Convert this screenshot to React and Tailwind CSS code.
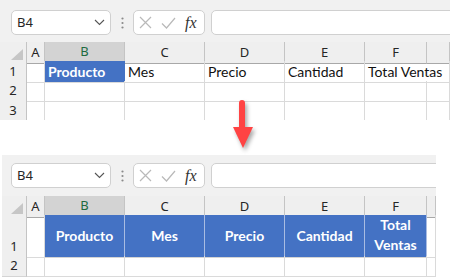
import React from 'react';

const COLS = ['A', 'B', 'C', 'D', 'E', 'F', 'G'];

const TOP_ROWS = [
  {
    n: 1,
    h: 'h-[20px]',
    cells: {
      B: { text: 'Producto', blue: true },
      C: { text: 'Mes' },
      D: { text: 'Precio' },
      E: { text: 'Cantidad' },
      F: { text: 'Total Ventas', overflow: true },
    },
  },
  { n: 2, h: 'h-[20px]', cells: {} },
  { n: 3, h: 'h-[20px]', cells: {} },
];

const BOTTOM_ROWS = [
  {
    n: 1,
    h: 'h-[41px]',
    tall: true,
    cells: {
      B: { text: 'Producto', blue: true, center: true },
      C: { text: 'Mes', blue: true, center: true },
      D: { text: 'Precio', blue: true, center: true },
      E: { text: 'Cantidad', blue: true, center: true },
      F: { text: 'Total Ventas', blue: true, center: true, wrap: true },
    },
  },
  { n: 2, h: 'h-[21px]', cells: {} },
];

function Chevron() {
  return (
    <svg width="11" height="7" viewBox="0 0 11 7" fill="none">
      <path d="M1 1l4.5 4.5L10 1" stroke="#555" strokeWidth="1.1" />
    </svg>
  );
}

function Toolbar({ top }) {
  return (
    <div className={top ? 'flex items-start h-[42px] pt-[10px] pl-[11px] bg-[#f1f1f1]' : 'flex items-start h-[41px] pt-[8px] pl-[9px] bg-[#f1f1f1]'}>
      {/* name box */}
      <div className="flex items-center justify-between w-[100px] h-[25px] pl-[5px] pr-[5px] bg-white border border-[#d0d0d0] rounded-[5px]">
        <span className="text-[13px] text-[#262626]">B4</span>
        <Chevron />
      </div>
      <div className="flex justify-center items-center w-[22px] h-[25px]">
        <svg width="3" height="12" viewBox="0 0 3 12">
          <circle cx="1.5" cy="1.5" r="1.1" fill="#8a8a8a" />
          <circle cx="1.5" cy="6" r="1.1" fill="#8a8a8a" />
          <circle cx="1.5" cy="10.5" r="1.1" fill="#8a8a8a" />
        </svg>
      </div>
      {/* cancel / enter / fx */}
      <div className="flex items-center w-[72px] h-[25px] bg-white border border-[#d0d0d0] rounded-[5px]">
        <svg className="ml-[5px]" width="13" height="13" viewBox="0 0 13 13" fill="none">
          <path d="M1 1l11 11M12 1L1 12" stroke="#b9b9b9" strokeWidth="1.2" />
        </svg>
        <svg className="ml-[9px]" width="15" height="12" viewBox="0 0 15 12" fill="none">
          <path d="M1 6.5l4.5 4.5L14 1" stroke="#b9b9b9" strokeWidth="1.2" />
        </svg>
        <span className="ml-[9px] font-['Liberation_Serif',serif] italic text-[16px] leading-none text-[#333]">fx</span>
      </div>
      {/* formula input */}
      <div className="flex-1 h-[25px] ml-[6px] -mr-[8px] bg-white border border-[#d0d0d0] rounded-[5px]" />
    </div>
  );
}

function HeaderRow({ top }) {
  return (
    <div className={top ? 'grid grid-cols-[27px_18px_80px_80px_80px_80px_62px_1fr] h-[19px]' : 'grid grid-cols-[25px_18px_80px_80px_80px_80px_62px_1fr] h-[19px]'}>
      <div className="flex justify-end items-end pr-[3px] pb-[3px] bg-[#efefef] border-r border-r-[#c4c4c4] border-b border-b-[#a8a8a8]">
        <svg width="12" height="11" viewBox="0 0 12 11">
          <polygon points="12,0 12,11 0,11" fill="#c6c6c6" />
        </svg>
      </div>
      {COLS.map((c) =>
        c === 'B' ? (
          <div key={c} className="flex items-center justify-center bg-[#d3d3d3] text-[#1e6b3f] text-[13px] border-r border-r-[#c4c4c4] border-b-2 border-b-[#217346]">
            {c}
          </div>
        ) : (
          <div key={c} className="flex items-center justify-center bg-[#efefef] text-[#262626] text-[13px] border-r border-r-[#c4c4c4] border-b border-b-[#a8a8a8]">
            {c === 'G' ? '' : c}
          </div>
        )
      )}
    </div>
  );
}

function Cell({ cell }) {
  if (!cell) {
    return <div className="border-r border-r-[#dadada] border-b border-b-[#dadada]" />;
  }
  if (cell.blue && cell.center) {
    return (
      <div className="flex items-center justify-center bg-[#4472c4] border-r border-r-[#a9bce2] border-b border-b-[#d4d4d4] pb-[2px]">
        <span className={cell.wrap ? 'w-[50px] text-center leading-[20px] font-bold text-white' : 'font-bold text-white'}>
          {cell.text}
        </span>
      </div>
    );
  }
  if (cell.blue) {
    return (
      <div className="flex items-center pl-[3px] bg-[#4472c4] border-r border-r-[#4472c4] border-b border-b-[#dadada]">
        <span className="font-bold text-white whitespace-nowrap">{cell.text}</span>
      </div>
    );
  }
  if (cell.overflow) {
    return (
      <div className="relative z-10 flex items-center pl-[3px] border-r border-r-transparent border-b border-b-[#dadada]">
        <span className="whitespace-nowrap text-[#111]">{cell.text}</span>
      </div>
    );
  }
  return (
    <div className="flex items-center pl-[3px] border-r border-r-[#dadada] border-b border-b-[#dadada]">
      <span className="whitespace-nowrap text-[#111]">{cell.text}</span>
    </div>
  );
}

function Row({ row, top }) {
  const grid = top
    ? 'grid grid-cols-[27px_18px_80px_80px_80px_80px_62px_1fr]'
    : 'grid grid-cols-[25px_18px_80px_80px_80px_80px_62px_1fr]';
  return (
    <div className={`${grid} ${row.h}`}>
      <div className={row.tall
        ? 'flex items-end justify-center pb-[1px] bg-[#efefef] border-r border-r-[#c4c4c4] border-b border-b-[#d4d4d4] text-[13px] text-[#262626] font-["Noto_Sans",sans-serif]'
        : 'flex items-center justify-center bg-[#efefef] border-r border-r-[#c4c4c4] border-b border-b-[#d4d4d4] text-[13px] text-[#262626] font-["Noto_Sans",sans-serif]'}>
        {row.n}
      </div>
      {COLS.map((c) => (
        <Cell key={c} cell={row.cells[c]} />
      ))}
    </div>
  );
}

function Sheet({ top }) {
  const rows = top ? TOP_ROWS : BOTTOM_ROWS;
  return (
    <div className={top ? 'w-[450px] h-[120px] overflow-hidden' : 'ml-[2px] w-[434px] h-[122px] overflow-hidden'}>
      <div className="font-['Noto_Sans',sans-serif]">
        <Toolbar top={top} />
        <HeaderRow top={top} />
      </div>
      <div className="font-['Lato',sans-serif] text-[14px] bg-white">
        {rows.map((r) => (
          <Row key={r.n} row={r} top={top} />
        ))}
      </div>
    </div>
  );
}

export default function App() {
  return (
    <div className="relative w-[450px] h-[277px] bg-white overflow-hidden">
      <Sheet top />
      <div className="h-[35px]" />
      <Sheet />
      {/* red arrow between the two shots */}
      <svg className="absolute left-[230px] top-[98px] drop-shadow-[2px_3px_2px_rgba(0,0,0,0.35)]" width="26" height="54" viewBox="0 0 26 54">
        <rect x="9" y="2" width="6" height="30" rx="3" fill="#ff4343" />
        <polygon points="3,29 23,29 13,50" fill="#ff4343" />
      </svg>
    </div>
  );
}
